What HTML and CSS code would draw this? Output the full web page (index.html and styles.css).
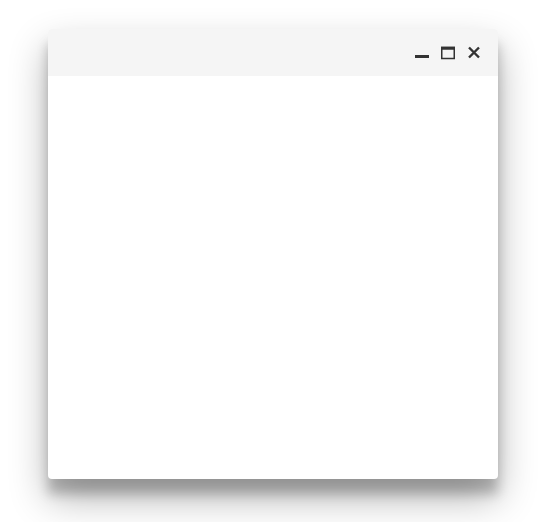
FILE: index.html
```html
<!DOCTYPE html>
<html>
<head>
<meta charset="utf-8">
<link rel="stylesheet" href="styles.css">
</head>
<body>
<div class="window">
  <div class="titlebar">
    <button class="ctl" aria-label="Minimize">
      <svg width="14" height="14" viewBox="0 0 14 14"><rect x="0" y="9" width="14" height="3" fill="#333"/></svg>
    </button>
    <button class="ctl" aria-label="Maximize">
      <svg width="14" height="14" viewBox="0 0 14 14"><rect x="0.75" y="1.5" width="12.5" height="11" fill="none" stroke="#333" stroke-width="1.5"/><rect x="0" y="0.75" width="14" height="3" fill="#333"/></svg>
    </button>
    <button class="ctl" aria-label="Close">
      <svg width="14" height="14" viewBox="0 0 14 14"><path d="M2 1.5 L12 11.5 M12 1.5 L2 11.5" stroke="#333" stroke-width="2.4" stroke-linecap="butt"/></svg>
    </button>
  </div>
  <div class="content"></div>
</div>
</body>
</html>
```
FILE: styles.css
```css
html, body {
  margin: 0;
  padding: 0;
  background: #fff;
  font-family: "Liberation Sans", Arial, sans-serif;
}
body {
  box-sizing: border-box;
  min-height: 522px;
  padding: 29px 0 0 48px;
}
.window {
  width: 450px;
  height: 450px;
  background: #fff;
  border-radius: 4px;
  overflow: hidden;
  box-shadow: 0 19px 38px rgba(0,0,0,0.30), 0 15px 12px rgba(0,0,0,0.22);
  display: flex;
  flex-direction: column;
}
.titlebar {
  height: 47px;
  background: #f5f5f5;
  display: flex;
  align-items: center;
  justify-content: flex-end;
  gap: 12px;
  padding: 0 17px 0 0;
}
.ctl {
  border: 0;
  background: none;
  padding: 0;
  width: 14px;
  height: 14px;
  display: block;
}
.ctl svg { display: block; }
.content {
  flex: 1;
}
```
